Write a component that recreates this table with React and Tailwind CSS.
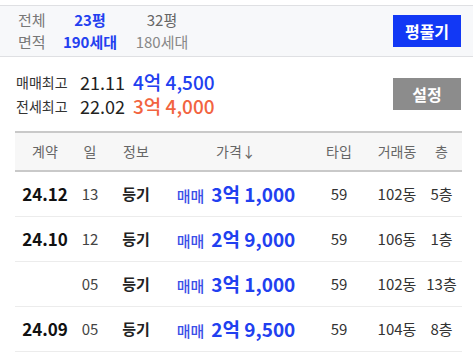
import React from 'react';

const rows = [
  { date: '24.12', day: '13', price: '3억 1,000', type: '59', dong: '102동', floor: '5층' },
  { date: '24.10', day: '12', price: '2억 9,000', type: '59', dong: '106동', floor: '1층' },
  { date: '', day: '05', price: '3억 1,000', type: '59', dong: '102동', floor: '13층' },
  { date: '24.09', day: '05', price: '2억 9,500', type: '59', dong: '104동', floor: '8층' },
];

const cols = 'grid grid-cols-[60px_30px_62px_138px_68px_48px_41px]';

export default function App() {
  return (
    <div
      className="w-[473px] h-[355px] bg-white overflow-hidden pt-[5px]"
      style={{ fontFamily: '"Noto Sans CJK KR", "Noto Sans", sans-serif' }}
    >
      {/* 면적 선택 */}
      <div className="h-[52px] bg-[#f7f8fa] border-y border-[#dfe0e3] flex items-center justify-between pl-[18px] pr-[12px]">
        <div className="grid grid-cols-[36px_72px_72px] text-[15px] leading-[22px]">
          <span className="text-[#777]">전체</span>
          <span className="text-center font-bold text-[#2340f0]">23평</span>
          <span className="text-center text-[#666]">32평</span>
          <span className="text-[#777]">면적</span>
          <span className="text-center font-semibold text-[#2340f0]">190세대</span>
          <span className="text-center text-[#888]">180세대</span>
        </div>
        <button className="w-[68px] h-[32px] bg-[#1238f5] text-white text-[16px] font-bold">평풀기</button>
      </div>

      {/* 최고가 */}
      <div className="h-[74px] flex items-center justify-between pl-[16px] pr-[12px]">
        <div className="flex flex-col gap-[2px] leading-[22px]">
          <div className="flex items-center h-[22px]">
            <span className="w-[64px] text-[14px] text-[#333]">매매최고</span>
            <span className="w-[53px] text-[18px] text-[#222]">21.11</span>
            <span className="text-[19px] font-medium text-[#2140f0]">4억 4,500</span>
          </div>
          <div className="flex items-center h-[22px]">
            <span className="w-[64px] text-[14px] text-[#333]">전세최고</span>
            <span className="w-[53px] text-[18px] text-[#222]">22.02</span>
            <span className="text-[19px] font-medium text-[#f2643f]">3억 4,000</span>
          </div>
        </div>
        <button className="w-[68px] h-[32px] bg-[#8c8c8c] text-white text-[16px] font-bold">설정</button>
      </div>

      {/* 거래 내역 */}
      <div className="ml-[15px] w-[447px]">
        <div className={`${cols} h-[41px] items-center bg-[#f7f7f7] border-y-2 border-[#c9c9c9] text-[14px] text-[#666] text-center`}>
          <span>계약</span>
          <span>일</span>
          <span>정보</span>
          <span>가격↓</span>
          <span>타입</span>
          <span>거래동</span>
          <span>층</span>
        </div>
        {rows.map((r, i) => (
          <div key={i} className={`${cols} h-[45px] items-center border-b border-[#ececec] text-center`}>
            <span className="text-[17px] font-bold text-[#111]">{r.date}</span>
            <span className="text-[15px] text-[#444]">{r.day}</span>
            <span className="text-[15px] font-bold text-[#222]">등기</span>
            <span className="flex items-baseline justify-center gap-[7px] text-[#2140f0]">
              <span className="text-[15px] font-medium text-[#3a4fe8]">매매</span>
              <span className="text-[19px] font-bold">{r.price}</span>
            </span>
            <span className="text-[15px] text-[#333]">{r.type}</span>
            <span className="text-[15px] text-[#333]">{r.dong}</span>
            <span className="text-[15px] text-[#333]">{r.floor}</span>
          </div>
        ))}
      </div>
    </div>
  );
}
